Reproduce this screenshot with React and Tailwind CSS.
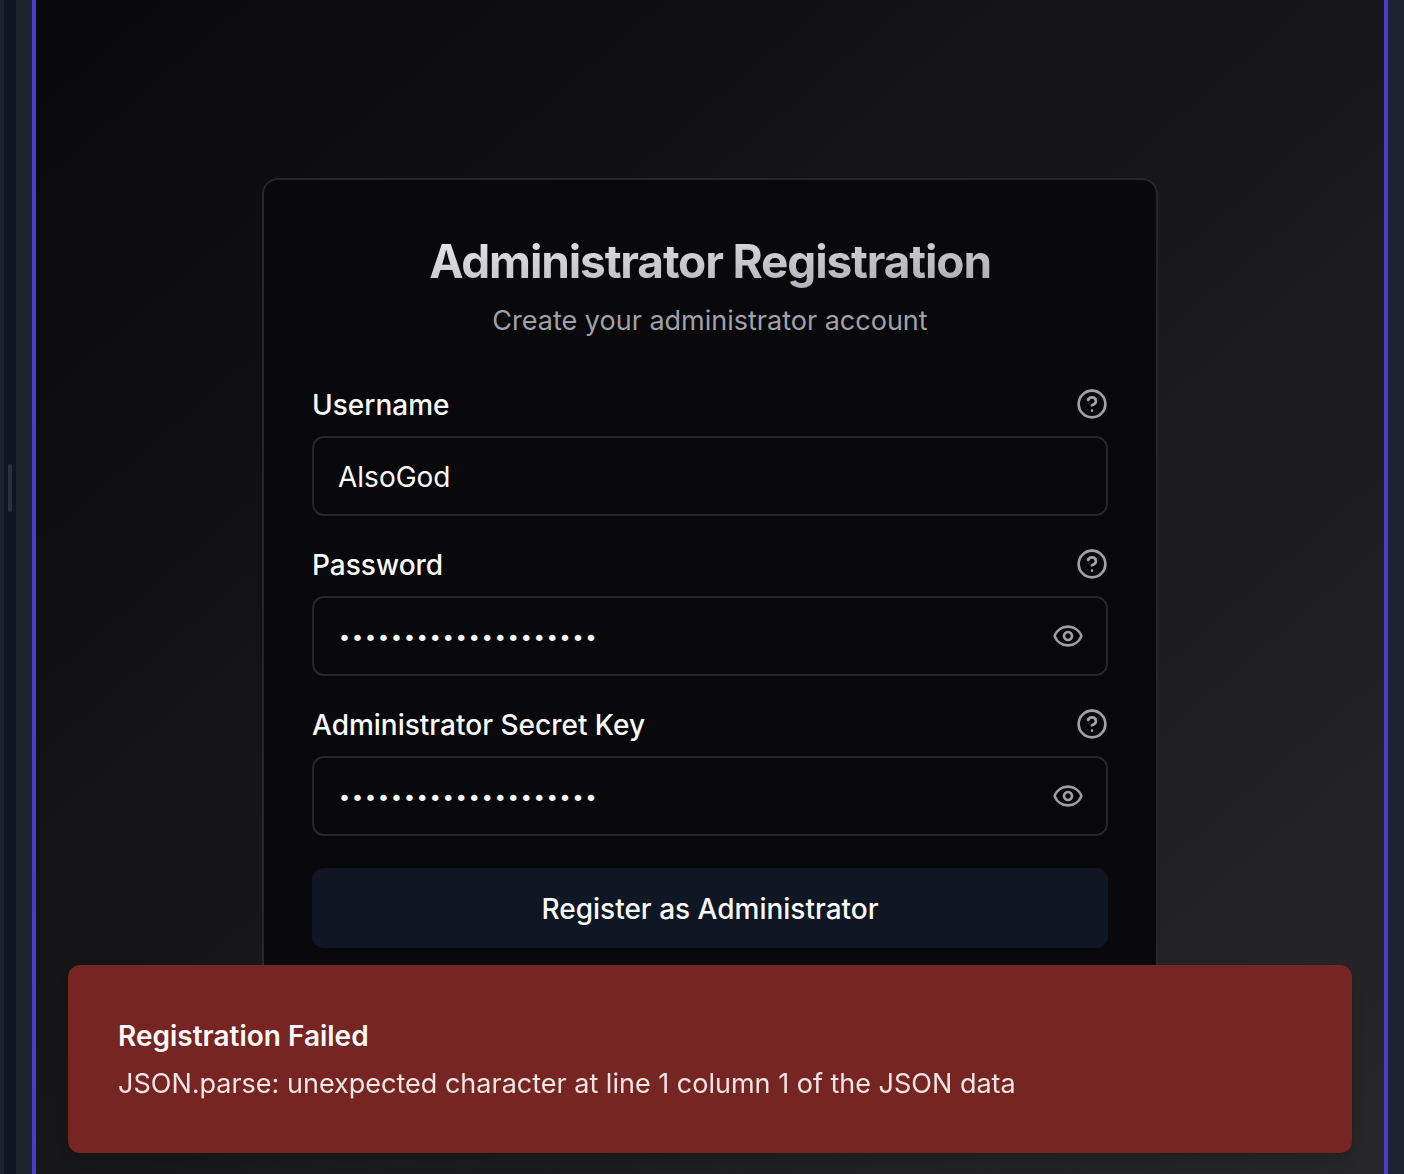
import { CircleHelp, Eye } from "lucide-react";

function Field({ id, label, type = "text", value }) {
  const secret = type === "password";
  return (
    <div className="flex flex-col gap-4">
      <div className="flex h-8 items-center justify-between">
        <label htmlFor={id} className="pt-0.5 text-[28px] leading-8 font-medium">{label}</label>
        <button type="button" aria-label={`Help for ${label}`} className="text-[#a1a1aa]">
          <CircleHelp size={32} strokeWidth={2} />
        </button>
      </div>
      <div className="relative">
        <input
          id={id}
          type={type}
          defaultValue={value}
          className={
            "h-20 w-full rounded-xl border-2 border-[#27272a] bg-[#09090b] px-6 text-[#fafafa] outline-none " +
            (secret ? "pt-1 pr-20 font-['DejaVu_Sans',sans-serif] text-[22px]" : "pt-0.5 text-[28px]")
          }
        />
        {secret && (
          <button type="button" aria-label={`Show ${label}`} className="absolute inset-y-0 right-6 flex items-center text-[#a1a1aa]">
            <Eye size={32} strokeWidth={2} />
          </button>
        )}
      </div>
    </div>
  );
}

export default function App() {
  return (
    <div className="flex h-screen overflow-hidden bg-[#1d2430] font-[Inter,sans-serif] text-[#fafafa]">
      <div className="w-1 shrink-0" />
      <div className="flex w-3 shrink-0 items-center justify-center bg-[#0f1624]">
        <div className="mb-[198px] h-12 w-1 rounded-full bg-[#2b303d]" />
      </div>
      <div className="w-4 shrink-0" />
      <main className="relative min-w-0 flex-1 border-x-4 border-[#4f3bc9] bg-linear-to-br from-[#09090b] to-[#27272a] bg-origin-border">
        <section className="mx-auto mt-[178px] w-full max-w-[896px] rounded-2xl border-2 border-[#27272a] bg-[#09090b] px-12 pt-[51px] pb-12">
          <h1 className="text-center text-[46px] leading-[60px] font-bold tracking-tight">
            <span className="block bg-linear-to-br from-[#f4f4f5] to-[#a1a1aa] bg-clip-text text-transparent">Administrator Registration</span>
          </h1>
          <p className="mt-2.5 text-center text-[27px] leading-10 text-[#a1a1aa]">Create your administrator account</p>
          <form className="mt-[47px] flex flex-col gap-8">
            <Field id="username" label="Username" value="AlsoGod" />
            <Field id="password" label="Password" type="password" value="abcdefghijklmnopqrst" />
            <Field id="secret" label="Administrator Secret Key" type="password" value="abcdefghijklmnopqrst" />
            <button type="button" className="h-20 rounded-xl bg-[#0f1624] pt-0.5 text-[28px] font-medium">Register as Administrator</button>
          </form>
        </section>
        <div role="alert" className="absolute inset-x-8 bottom-[21px] flex flex-col gap-2 rounded-xl border-2 border-[#762522] bg-[#762522] px-12 pt-[49px] pb-[47px] shadow-lg">
          <h2 className="text-[28px] leading-10 font-semibold">Registration Failed</h2>
          <p className="text-[27px] leading-10 opacity-90">JSON.parse: unexpected character at line 1 column 1 of the JSON data</p>
        </div>
      </main>
      <div className="w-4 shrink-0" />
    </div>
  );
}
